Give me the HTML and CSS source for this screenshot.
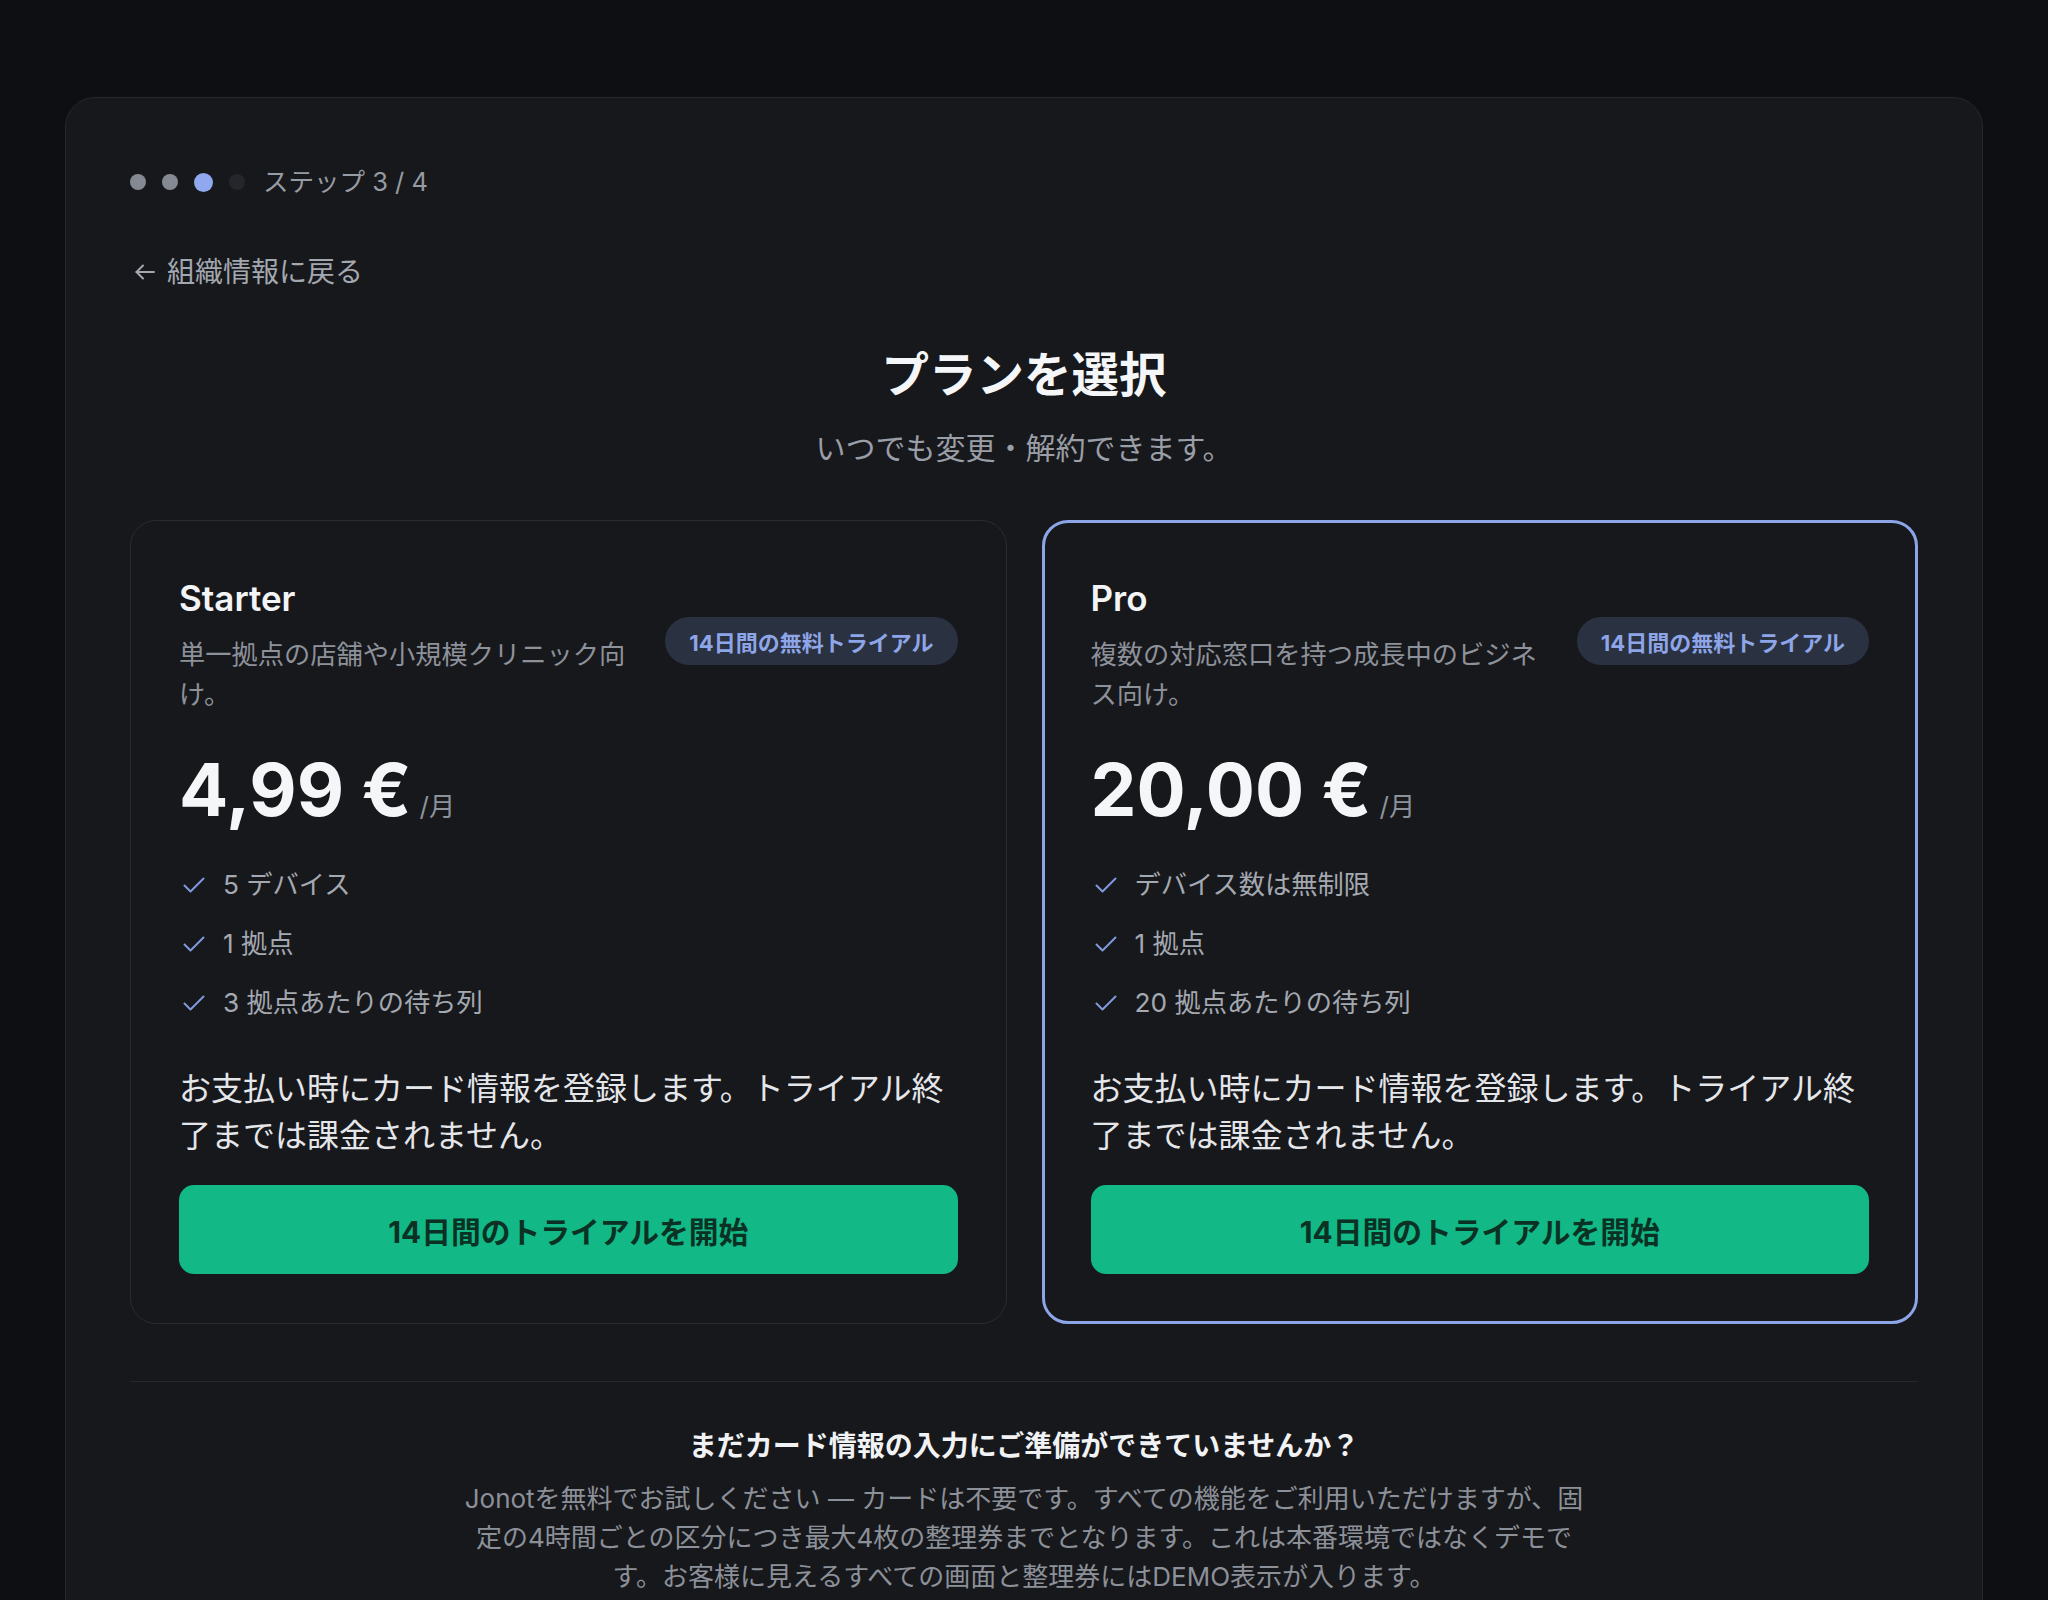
FILE: index.html
```html
<!DOCTYPE html>
<html lang="ja">
<head>
<meta charset="utf-8">
<title>プランを選択</title>
<link rel="stylesheet" href="styles.css">
</head>
<body>
<div class="page">
  <main class="panel">
    <div class="steps">
      <span class="dot dot--done"></span>
      <span class="dot dot--done"></span>
      <span class="dot dot--current"></span>
      <span class="dot"></span>
      <span class="step-label">ステップ 3 / 4</span>
    </div>

    <a class="back" href="#">
      <svg class="back-icon" viewBox="0 0 20 16" width="20" height="16" fill="none" stroke="currentColor" stroke-width="2" stroke-linecap="round" stroke-linejoin="round"><path d="M19 8H1.5"/><path d="M8 1.5L1.5 8 8 14.5"/></svg>
      <span>組織情報に戻る</span>
    </a>

    <header class="intro">
      <h1 class="intro-title">プランを選択</h1>
      <p class="intro-sub">いつでも変更・解約できます。</p>
    </header>

    <div class="plans">
      <section class="plan">
        <div class="plan-head">
          <div class="plan-info">
            <h2 class="plan-name">Starter</h2>
            <p class="plan-desc">単一拠点の店舗や小規模クリニック向け。</p>
          </div>
          <span class="badge">14日間の無料トライアル</span>
        </div>
        <div class="price">
          <span class="price-amount">4,99 €</span>
          <span class="price-unit">/月</span>
        </div>
        <ul class="features">
          <li class="feature"><svg class="check" viewBox="0 0 22 16" width="22" height="16" fill="none" stroke="currentColor" stroke-width="2" stroke-linecap="round" stroke-linejoin="round"><path d="M1.5 8.5l6 6L20.5 1.5"/></svg><span>5 デバイス</span></li>
          <li class="feature"><svg class="check" viewBox="0 0 22 16" width="22" height="16" fill="none" stroke="currentColor" stroke-width="2" stroke-linecap="round" stroke-linejoin="round"><path d="M1.5 8.5l6 6L20.5 1.5"/></svg><span>1 拠点</span></li>
          <li class="feature"><svg class="check" viewBox="0 0 22 16" width="22" height="16" fill="none" stroke="currentColor" stroke-width="2" stroke-linecap="round" stroke-linejoin="round"><path d="M1.5 8.5l6 6L20.5 1.5"/></svg><span>3 拠点あたりの待ち列</span></li>
        </ul>
        <p class="plan-note">お支払い時にカード情報を登録します。トライアル終了までは課金されません。</p>
        <button class="cta" type="button">14日間のトライアルを開始</button>
      </section>

      <section class="plan plan--featured">
        <div class="plan-head">
          <div class="plan-info">
            <h2 class="plan-name">Pro</h2>
            <p class="plan-desc">複数の対応窓口を持つ成長中のビジネス向け。</p>
          </div>
          <span class="badge">14日間の無料トライアル</span>
        </div>
        <div class="price">
          <span class="price-amount">20,00 €</span>
          <span class="price-unit">/月</span>
        </div>
        <ul class="features">
          <li class="feature"><svg class="check" viewBox="0 0 22 16" width="22" height="16" fill="none" stroke="currentColor" stroke-width="2" stroke-linecap="round" stroke-linejoin="round"><path d="M1.5 8.5l6 6L20.5 1.5"/></svg><span>デバイス数は無制限</span></li>
          <li class="feature"><svg class="check" viewBox="0 0 22 16" width="22" height="16" fill="none" stroke="currentColor" stroke-width="2" stroke-linecap="round" stroke-linejoin="round"><path d="M1.5 8.5l6 6L20.5 1.5"/></svg><span>1 拠点</span></li>
          <li class="feature"><svg class="check" viewBox="0 0 22 16" width="22" height="16" fill="none" stroke="currentColor" stroke-width="2" stroke-linecap="round" stroke-linejoin="round"><path d="M1.5 8.5l6 6L20.5 1.5"/></svg><span>20 拠点あたりの待ち列</span></li>
        </ul>
        <p class="plan-note">お支払い時にカード情報を登録します。トライアル終了までは課金されません。</p>
        <button class="cta" type="button">14日間のトライアルを開始</button>
      </section>
    </div>

    <hr class="divider">

    <section class="demo">
      <h2 class="demo-title">まだカード情報の入力にご準備ができていませんか？</h2>
      <p class="demo-text">Jonotを無料でお試しください — カードは不要です。すべての機能をご利用いただけますが、固定の4時間ごとの区分につき最大4枚の整理券までとなります。これは本番環境ではなくデモです。お客様に見えるすべての画面と整理券にはDEMO表示が入ります。</p>
    </section>
  </main>
</div>
</body>
</html>
```

FILE: styles.css
```css
* { box-sizing: border-box; }

html, body {
  margin: 0;
  padding: 0;
  background: #0e0f12;
}

body {
  font-family: "Inter", "Noto Sans CJK JP", "Noto Sans", sans-serif;
  color: #e6e7ea;
}

.page {
  padding: 97px 65px 0;
}

.panel {
  background: #17181c;
  border: 1px solid #26282d;
  border-radius: 30px;
  padding: 66px 64px 80px;
}

/* steps */
.steps {
  display: flex;
  align-items: center;
  gap: 16px;
  height: 36px;
}
.dot {
  width: 16px;
  height: 16px;
  border-radius: 50%;
  background: #24262b;
}
.dot--done { background: #858991; }
.dot--current {
  width: 19px;
  height: 19px;
  background: #8fa8ef;
}
.step-label {
  margin-left: 2px;
  font-size: 25.5px;
  line-height: 36px;
  color: #979ba3;
}

/* back link */
.back {
  display: inline-flex;
  align-items: center;
  gap: 12px;
  margin-top: 52px;
  height: 40px;
  font-size: 28px;
  line-height: 40px;
  color: #a3a7af;
  text-decoration: none;
}
.back-icon {
  flex: none;
  margin-left: 5px;
}

/* intro */
.intro {
  text-align: center;
  margin-top: 51px;
}
.intro-title {
  margin: 0;
  font-size: 47.5px;
  line-height: 64px;
  font-weight: 700;
  color: #f5f6f8;
}
.intro-sub {
  margin: 21px 0 0;
  font-size: 30px;
  line-height: 40px;
  color: #9a9ea6;
}

/* plans */
.plans {
  margin-top: 52px;
  display: grid;
  grid-template-columns: 1fr 1fr;
  gap: 35px;
}
.plan {
  border: 1px solid #2a2c31;
  border-radius: 26px;
  background: #17181c;
  padding: 55px 48px 49px;
  display: flex;
  flex-direction: column;
}
.plan--featured {
  border: 3px solid #8ca5e6;
  padding: 53px 46px 47px;
}

.plan-head {
  display: flex;
  align-items: center;
  gap: 28px;
}
.plan-info {
  flex: 1;
  min-width: 0;
}
.plan-name {
  margin: 0;
  font-size: 35px;
  line-height: 45px;
  font-weight: 600;
  color: #f3f4f6;
}
.plan-desc {
  margin: 14px 0 0;
  font-size: 26.25px;
  line-height: 40px;
  color: #8d9199;
}
.badge {
  flex: none;
  display: inline-flex;
  align-items: center;
  height: 48px;
  margin-bottom: 10px;
  padding: 0 24px;
  border-radius: 24px;
  background: #2a3141;
  color: #8ea5e8;
  font-size: 22px;
  font-weight: 700;
  white-space: nowrap;
}

.price {
  margin-top: 38px;
  display: flex;
  align-items: baseline;
  gap: 8px;
  line-height: 1;
}
.price-amount {
  font-size: 73px;
  font-weight: 700;
  color: #f5f6f8;
}
.price-unit {
  font-size: 26.25px;
  color: #8d9199;
}

.features {
  list-style: none;
  margin: 41px 0 0;
  padding: 0;
  display: flex;
  flex-direction: column;
  gap: 23px;
}
.feature {
  display: flex;
  align-items: center;
  gap: 18px;
  font-size: 26.25px;
  line-height: 36px;
  color: #a4a8b0;
}
.check {
  flex: none;
  color: #7f99dc;
  margin-left: 4px;
}

.plan-note {
  margin: 44px 0 0;
  font-size: 32px;
  line-height: 47px;
  color: #e4e6ea;
}

.cta {
  margin-top: 26px;
  height: 89px;
  border: 0;
  border-radius: 15px;
  background: #12b886;
  color: #0b3124;
  font-family: inherit;
  font-size: 29.75px;
  font-weight: 700;
  cursor: pointer;
}

/* divider */
.divider {
  margin: 57px 0 0;
  border: 0;
  border-top: 1px solid #26282d;
  height: 0;
}

/* demo */
.demo {
  text-align: center;
  margin-top: 44px;
}
.demo-title {
  margin: 0;
  font-size: 28px;
  line-height: 40px;
  font-weight: 700;
  color: #f1f2f4;
}
.demo-text {
  margin: 13px auto 0;
  max-width: 1136px;
  font-size: 26px;
  line-height: 39px;
  color: #8c9098;
}
```
